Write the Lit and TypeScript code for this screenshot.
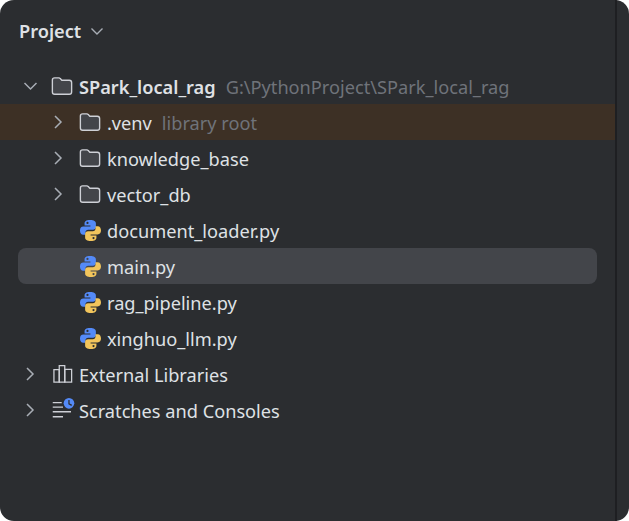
import { LitElement, html, css, svg } from "lit";
import { customElement } from "lit/decorators.js";
import { classMap } from "lit/directives/class-map.js";

type IconKind = "folder" | "python" | "library" | "scratch";

interface TreeRow {
  label: string;
  depth: number;
  icon: IconKind;
  chevron?: "open" | "closed";
  hint?: string;
  bold?: boolean;
  excluded?: boolean;
  selected?: boolean;
}

const ROWS: TreeRow[] = [
  { label: "SPark_local_rag", depth: 0, icon: "folder", chevron: "open", hint: "G:\\PythonProject\\SPark_local_rag", bold: true },
  { label: ".venv", depth: 1, icon: "folder", chevron: "closed", hint: "library root", excluded: true },
  { label: "knowledge_base", depth: 1, icon: "folder", chevron: "closed" },
  { label: "vector_db", depth: 1, icon: "folder", chevron: "closed" },
  { label: "document_loader.py", depth: 1, icon: "python" },
  { label: "main.py", depth: 1, icon: "python", selected: true },
  { label: "rag_pipeline.py", depth: 1, icon: "python" },
  { label: "xinghuo_llm.py", depth: 1, icon: "python" },
  { label: "External Libraries", depth: 0, icon: "library", chevron: "closed" },
  { label: "Scratches and Consoles", depth: 0, icon: "scratch", chevron: "closed" },
];

const SNAKE =
  "M12 1C7.5 1 6 2.6 6 4.8V7H12.4V8.2H4.8C2.2 8.2 1 10 1 12.4C1 15 2.2 17.2 4.6 17.2H7V14.6C7 12.8 8.2 11.6 10 11.6H15.2C17.2 11.6 18.4 10.2 18.4 8.4V4.8C18.4 2.6 16.4 1 12 1ZM9.2 3A1.2 1.2 0 1 1 9.2 5.4A1.2 1.2 0 1 1 9.2 3Z";

@customElement("app-root")
export class AppRoot extends LitElement {
  static styles = css`
    :host {
      display: block;
      width: 629px;
      height: 521px;
      background: #fff;
      font-family: "Noto Sans", "Open Sans", sans-serif;
      font-size: 18.2px;
    }

    .panel {
      display: flex;
      height: 100%;
      background: #2b2d30;
      border-radius: 14px;
      overflow: hidden;
    }

    .main {
      width: 615px;
      border-right: 2px solid #1e1f22;
      flex-shrink: 0;
    }

    .header {
      display: flex;
      align-items: center;
      gap: 9px;
      height: 62px;
      padding-left: 19px;
      color: #dfe1e5;
      font-weight: 600;
    }

    .tree {
      padding-top: 6px;
    }

    .row {
      height: 36px;
    }

    .row.excluded {
      background: #3d3025;
    }

    .inner {
      display: flex;
      align-items: center;
      height: 100%;
      margin: 0 18px;
      border-radius: 8px;
      white-space: nowrap;
      color: #dfe1e5;
    }

    .selected .inner {
      background: #43454a;
    }

    .slot {
      display: flex;
      justify-content: center;
      width: 24px;
      margin-right: 9px;
      flex-shrink: 0;
    }

    .icon {
      display: block;
      width: 22px;
      height: 22px;
      margin-right: 6px;
      flex-shrink: 0;
      overflow: visible;
    }

    .icon.python {
      width: 21px;
      height: 21px;
      margin-left: 1px;
    }

    .name,
    .hint {
      padding-top: 2px;
    }

    .name.bold {
      font-weight: 600;
    }

    .hint {
      margin-left: 10px;
      color: #6f737a;
    }
  `;

  private _chevron(dir?: "open" | "closed") {
    if (!dir) return html``;
    const d = dir === "open" ? "M5.5 8L11.5 14L17.5 8" : "M8 5L14 11L8 17";
    return html`<svg width="22" height="22" viewBox="0 0 22 22" fill="none">
      <path d=${d} stroke="#a8adb5" stroke-width="1.5"></path>
    </svg>`;
  }

  private _icon(kind: IconKind) {
    if (kind === "python") {
      return html`<svg class="icon python" viewBox="1 1 23 23">
        <path d=${SNAKE} fill="#548af7" fill-rule="evenodd"></path>
        <path d=${SNAKE} fill="#f2c55c" fill-rule="evenodd" transform="rotate(180 12 12) translate(-1 -1)"></path>
      </svg>`;
    }
    let body;
    if (kind === "folder") {
      body = svg`<path d="M1.5 5.5C1.5 4 2.5 3.2 4 3.2H8.5C9.2 3.2 9.7 3.4 10.1 3.9L11.8 5.7H20C21.5 5.7 22.5 6.7 22.5 8.2V18.5C22.5 20 21.5 21 20 21H4C2.5 21 1.5 20 1.5 18.5Z" fill="#43454a" stroke="#ced0d6" stroke-width="1.5"></path>`;
    } else if (kind === "library") {
      body = svg`<g fill="none" stroke="#ced0d6" stroke-width="1.4">
        <path d="M3.2 7.2H9V20.8H3.2Z"></path>
        <path d="M9 2.9H15V20.8H9Z"></path>
        <path d="M15 7H22.5V20.8H15Z"></path>
      </g>`;
    } else {
      body = svg`<path d="M1.9 4H11.7M1.9 8.8H13.1M1.9 13.9H21.8M1.9 19.3H13.1" fill="none" stroke="#ced0d6" stroke-width="1.5"></path>
      <circle cx="19.6" cy="4.7" r="5.8" fill="#548af7"></circle>
      <path d="M19.6 1.2V5.2L22.6 7" fill="none" stroke="#2b2d30" stroke-width="1.4"></path>`;
    }
    return html`<svg class="icon" viewBox="0 0 24 24">${body}</svg>`;
  }

  render() {
    return html`
      <div class="panel">
        <div class="main">
          <div class="header">
            Project
            <svg width="14" height="14" viewBox="0 0 14 14" fill="none">
              <path d="M1.5 4.5L7 10L12.5 4.5" stroke="#a8adb5" stroke-width="1.4"></path>
            </svg>
          </div>
          <div class="tree">
            ${ROWS.map(
              (row) => html`
                <div class=${classMap({ row: true, excluded: !!row.excluded, selected: !!row.selected })}>
                  <div class="inner" style="padding-left: ${row.depth * 28}px">
                    <span class="slot">${this._chevron(row.chevron)}</span>
                    ${this._icon(row.icon)}
                    <span class=${classMap({ name: true, bold: !!row.bold })}>${row.label}</span>
                    ${row.hint ? html`<span class="hint">${row.hint}</span>` : ""}
                  </div>
                </div>
              `
            )}
          </div>
        </div>
      </div>
    `;
  }
}

declare global {
  interface HTMLElementTagNameMap {
    "app-root": AppRoot;
  }
}
